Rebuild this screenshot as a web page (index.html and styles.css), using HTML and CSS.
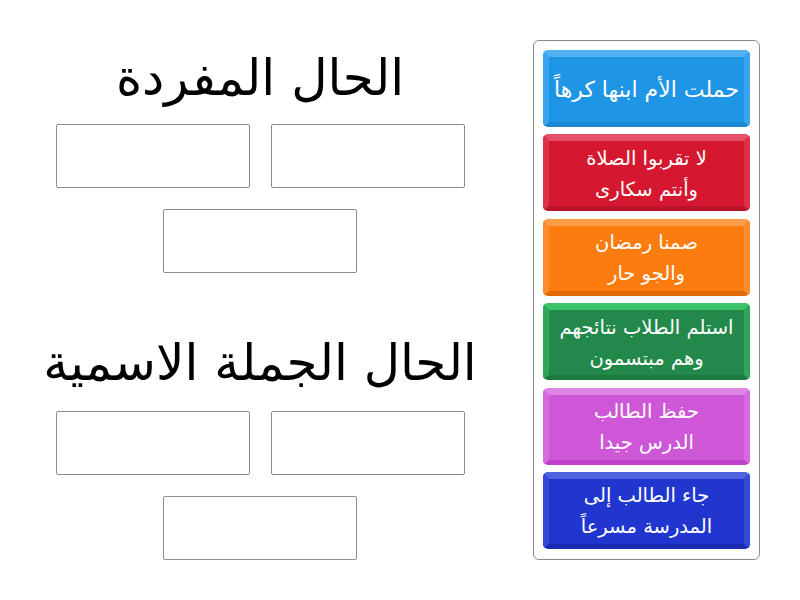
FILE: index.html
```html
<!DOCTYPE html>
<html lang="ar">
<head>
<meta charset="utf-8">
<link rel="stylesheet" href="styles.css">
</head>
<body>
<div class="page">
  <div class="targets">
    <section class="group g1">
      <h1 class="title" dir="rtl">الحال المفردة</h1>
      <div class="boxes">
        <div class="box"></div>
        <div class="box"></div>
        <div class="box"></div>
      </div>
    </section>
    <section class="group g2">
      <h1 class="title" dir="rtl">الحال الجملة الاسمية</h1>
      <div class="boxes">
        <div class="box"></div>
        <div class="box"></div>
        <div class="box"></div>
      </div>
    </section>
  </div>
  <div class="panel" dir="rtl">
    <div class="tile blue big">حملت الأم ابنها كرهاً</div>
    <div class="tile red">لا تقربوا الصلاة<br>وأنتم سكارى</div>
    <div class="tile orange">صمنا رمضان<br>والجو حار</div>
    <div class="tile green">استلم الطلاب نتائجهم<br>وهم مبتسمون</div>
    <div class="tile purple">حفظ الطالب<br>الدرس جيدا</div>
    <div class="tile navy">جاء الطالب إلى<br>المدرسة مسرعاً</div>
  </div>
</div>
</body>
</html>
```
FILE: styles.css
```css
html, body {
  margin: 0;
  padding: 0;
  background: #ffffff;
}
body {
  font-family: "DejaVu Sans", sans-serif;
  color: #000;
}
.page {
  display: flex;
  flex-direction: row;
  padding: 40px 0 0 40px;
}
.targets {
  width: 440px;
  display: flex;
  flex-direction: column;
}
.group {
  display: flex;
  flex-direction: column;
  align-items: center;
}
.title {
  margin: 0;
  font-weight: normal;
  font-size: 50px;
  line-height: 76px;
  height: 84px;
  white-space: nowrap;
}
.g2 {
  margin-top: 52px;
}
.g2 .title {
  height: 86px;
}
.boxes {
  width: 410px;
  display: flex;
  flex-wrap: wrap;
  justify-content: center;
  gap: 21px 21px;
}
.box {
  width: 192px;
  height: 62px;
  border: 1px solid #8c8c8c;
  border-radius: 2px;
  background: #fff;
}
.panel {
  margin-left: 53px;
  width: 207px;
  padding: 9px;
  border: 1px solid #8a8a8a;
  border-radius: 6px;
  display: flex;
  flex-direction: column;
  gap: 7.4px;
}
.tile {
  height: 77px;
  box-sizing: border-box;
  border-radius: 5px;
  display: flex;
  align-items: center;
  justify-content: center;
  text-align: center;
  color: #fff;
  font-size: 19.5px;
  line-height: 31px;
  border-style: solid;
  border-width: 7px 6px 5px 6px;
  white-space: nowrap;
}
.big {
  font-size: 22px;
}
.blue {
  background: #1f95e6;
  border-color: #52b1f0 #3aa5ee #1887d4 #3aa5ee;
}
.red {
  background: #d5182f;
  border-color: #e6516a #df3049 #b8132a #df3049;
}
.orange {
  background: #fc7c10;
  border-color: #fd9d48 #fd8c2e #e36a08 #fd8c2e;
}
.green {
  background: #23894a;
  border-color: #3cc46a #2fa45a #1c7a40 #2fa45a;
}
.purple {
  background: #cd57d6;
  border-color: #df86e5 #d56cdd #c03fca #d56cdd;
}
.navy {
  background: #2136cf;
  border-color: #4f63e0 #3449d8 #1a2bb4 #3449d8;
}
```
